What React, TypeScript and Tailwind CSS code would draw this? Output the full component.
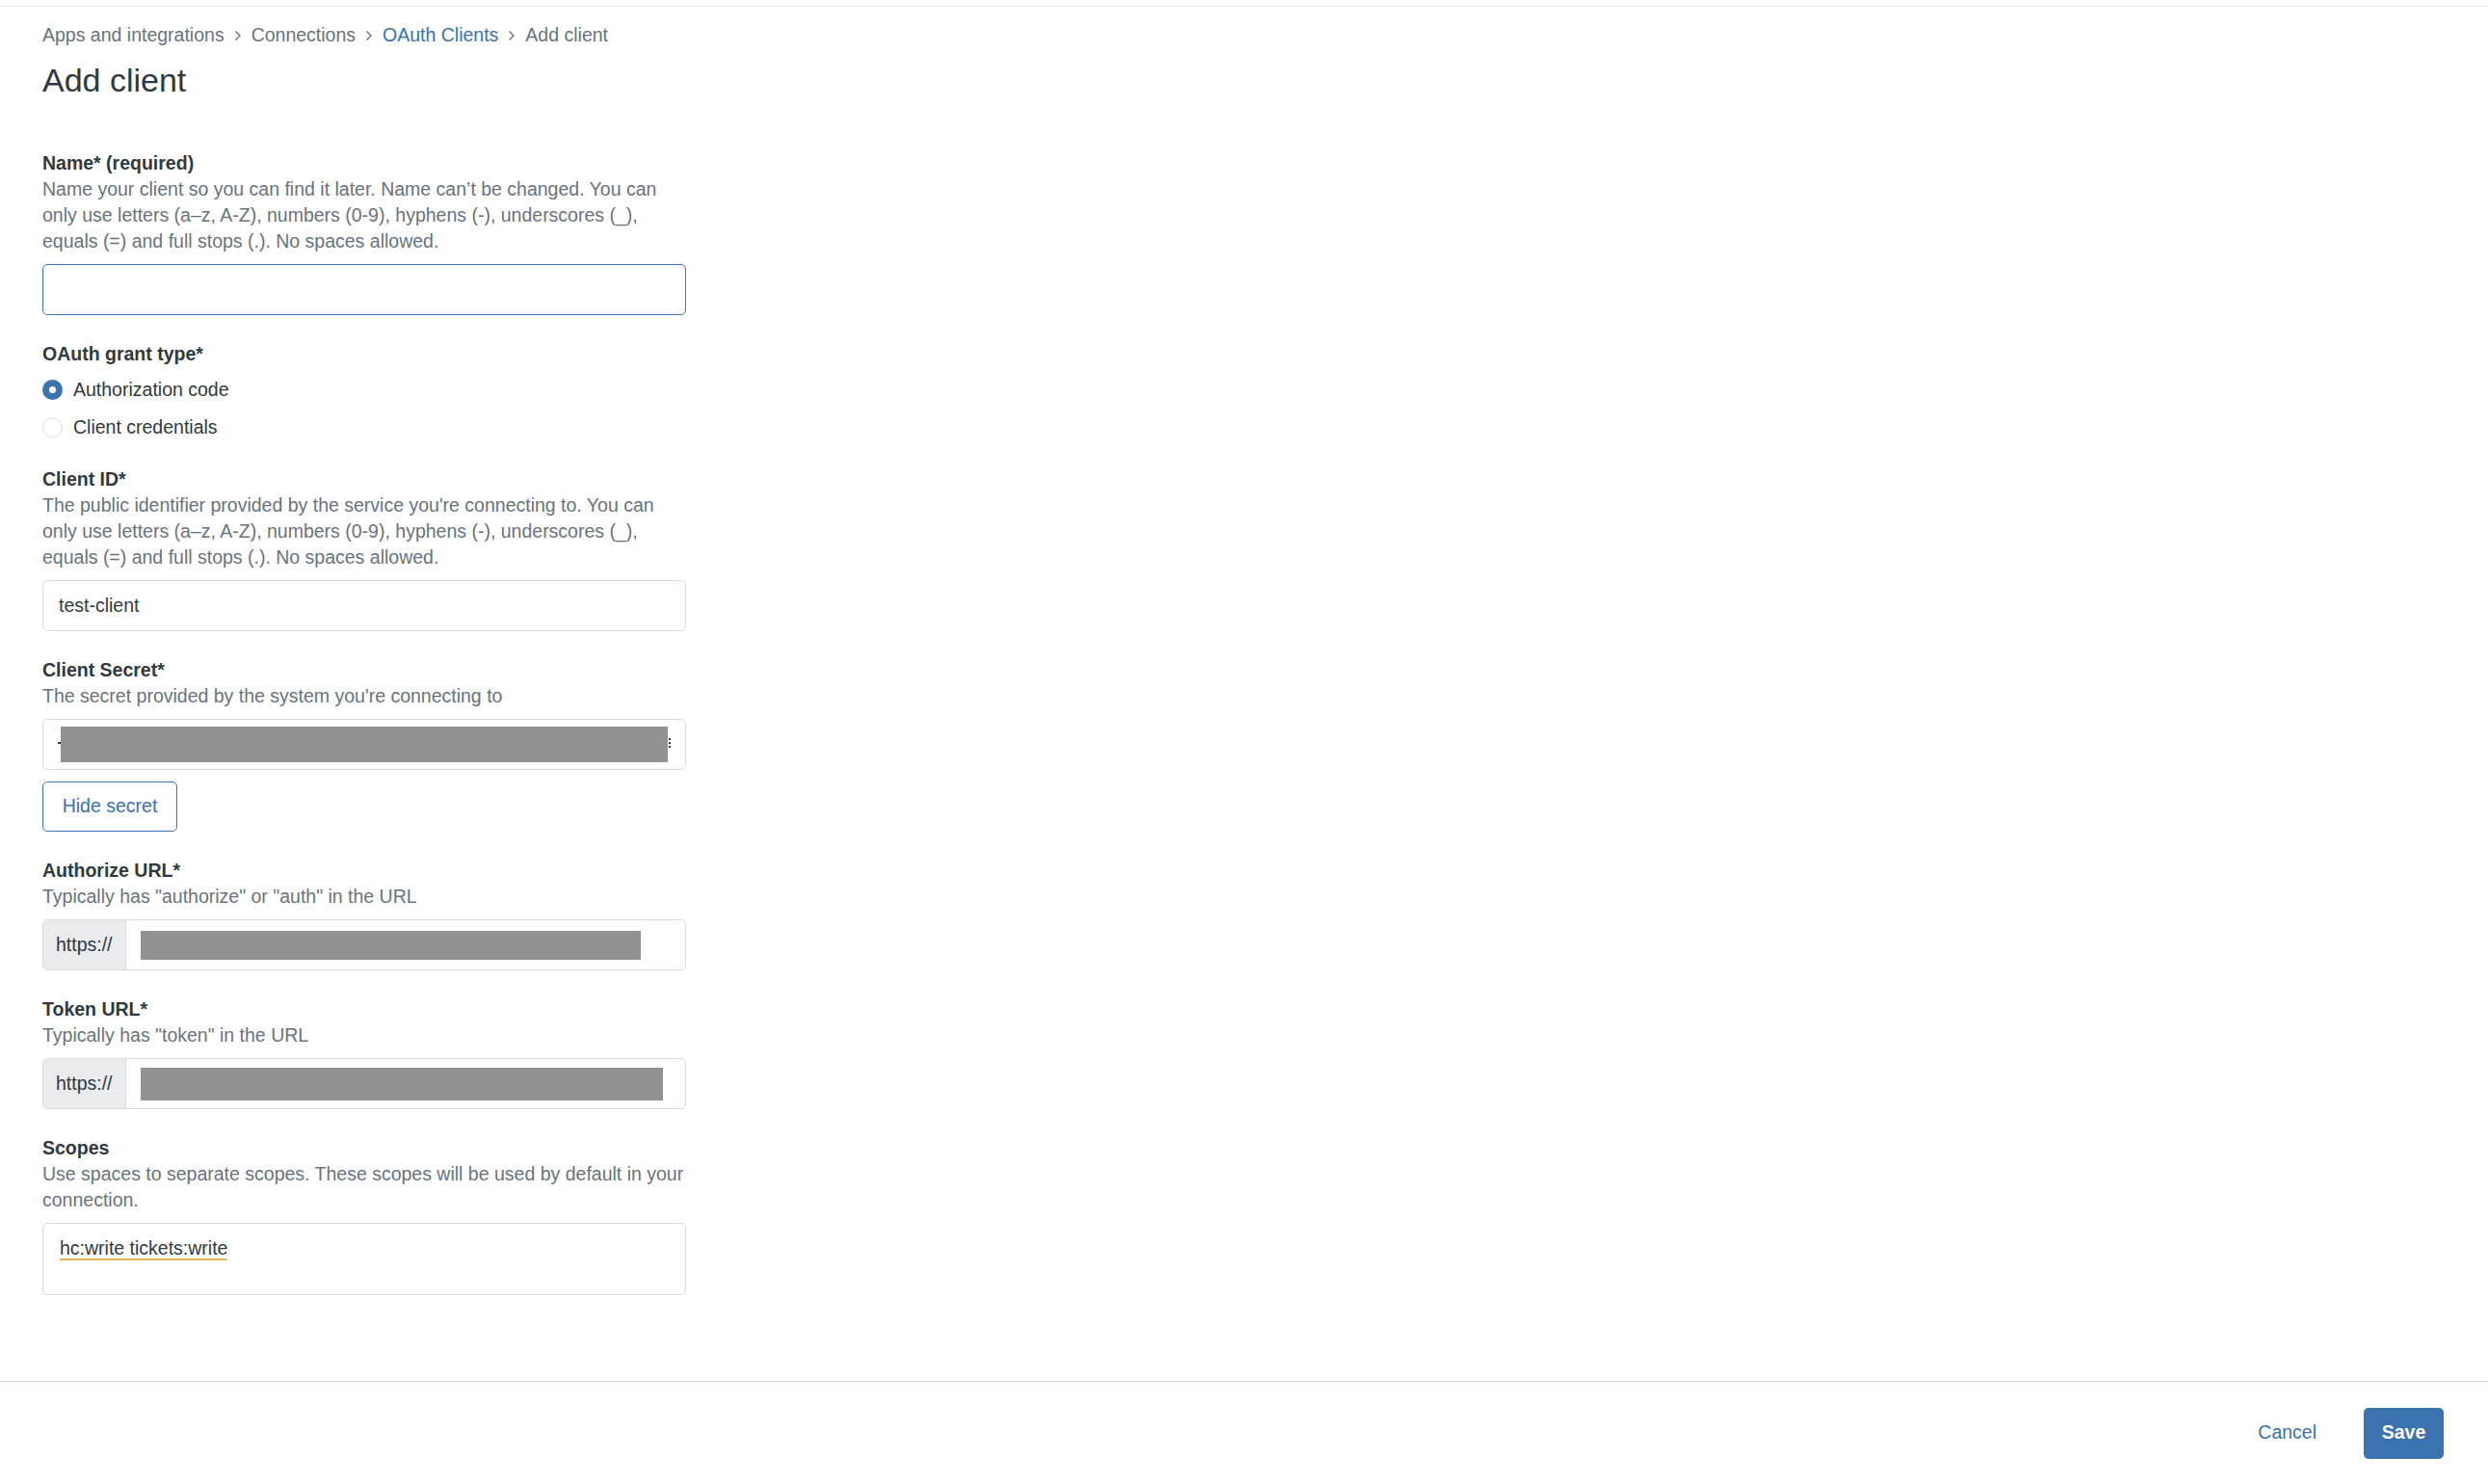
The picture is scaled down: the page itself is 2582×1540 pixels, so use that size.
import { ReactNode } from 'react';

interface FieldProps {
  label: string;
  hint?: ReactNode;
  children: ReactNode;
}

function Field({ label, hint, children }: FieldProps) {
  return (
    <div className="flex flex-col">
      <div className="text-[19.5px] leading-[27px] font-bold text-[#2f3941]">{label}</div>
      {hint && <div className="text-[19.5px] leading-[27px] text-[#68737d]">{hint}</div>}
      <div className="mt-[10px]">{children}</div>
    </div>
  );
}

function Chevron() {
  return (
    <svg width="8" height="12" viewBox="0 0 8 12" className="mx-[10px] shrink-0">
      <path d="M1.5 1.5 L6 6 L1.5 10.5" fill="none" stroke="#68737d" strokeWidth="1.4" />
    </svg>
  );
}

function Redacted({ className }: { className: string }) {
  return <div className={`bg-[#919191] ${className}`} />;
}

function UrlInput({ box }: { box: string }) {
  return (
    <div className="flex h-[53px] w-[668px] rounded-[5px] border border-[#d8dcde] overflow-hidden">
      <div className="flex w-[86px] items-center border-r border-[#d8dcde] bg-[#e9ebed] pl-[13px] text-[19.5px] text-[#2f3941]">
        https://
      </div>
      <div className="flex flex-1 items-center pl-[15px]">
        <Redacted className={box} />
      </div>
    </div>
  );
}

export default function App() {
  return (
    <div className="flex h-[1540px] flex-col bg-white font-['Liberation_Sans',Arial,sans-serif] text-[#2f3941]">
      <div className="h-[7px] border-b border-[#e3e5e7]" />

      <main className="flex-1 pl-[44px]">
        {/* Breadcrumb */}
        <nav className="mt-[16px] flex items-center text-[19.5px] leading-[27px] text-[#68737d]">
          <span>Apps and integrations</span>
          <Chevron />
          <span>Connections</span>
          <Chevron />
          <span className="text-[#3872b5]">OAuth Clients</span>
          <Chevron />
          <span>Add client</span>
        </nav>

        <h1 className="mt-[13px] text-[34px] leading-[40px] text-[#2f3941]">Add client</h1>

        <form className="mt-[53px] flex w-[668px] flex-col gap-[27px]">
          <Field
            label="Name* (required)"
            hint="Name your client so you can find it later. Name can’t be changed. You can only use letters (a–z, A-Z), numbers (0-9), hyphens (-), underscores (_), equals (=) and full stops (.). No spaces allowed."
          >
            <div className="h-[53px] rounded-[5px] border border-[#3f74b4]" />
          </Field>

          <div className="flex flex-col">
            <div className="text-[19.5px] leading-[27px] font-bold">OAuth grant type*</div>
            <div className="mt-[10px] flex flex-col gap-[12px]">
              <label className="flex h-[27px] items-center gap-[11px] text-[19.5px]">
                <span className="flex h-[21px] w-[21px] items-center justify-center rounded-full bg-[#3b73b0]">
                  <span className="h-[7px] w-[7px] rounded-full bg-white" />
                </span>
                Authorization code
              </label>
              <label className="flex h-[27px] items-center gap-[11px] text-[19.5px]">
                <span className="h-[21px] w-[21px] rounded-full border border-[#d8dcde] bg-white" />
                Client credentials
              </label>
            </div>
          </div>

          <Field
            label="Client ID*"
            hint="The public identifier provided by the service you're connecting to. You can only use letters (a–z, A-Z), numbers (0-9), hyphens (-), underscores (_), equals (=) and full stops (.). No spaces allowed."
          >
            <div className="flex h-[53px] items-center rounded-[5px] border border-[#d8dcde] pl-[16px] text-[19.5px]">
              test-client
            </div>
          </Field>

          <div className="flex flex-col">
            <Field label="Client Secret*" hint="The secret provided by the system you're connecting to">
              <div className="relative flex h-[53px] items-center rounded-[5px] border border-[#d8dcde] pl-[18px]">
                <Redacted className="h-[37px] w-[630px]" />
                <span className="absolute left-[15px] top-[23px] h-[2px] w-[3px] bg-[#2f3941]" />
                <span className="absolute left-[649px] top-[19px] flex flex-col gap-[2px]">
                  <span className="h-[2px] w-[2px] bg-[#2f3941]" />
                  <span className="h-[2px] w-[2px] bg-[#2f3941]" />
                  <span className="h-[2px] w-[2px] bg-[#2f3941]" />
                </span>
              </div>
            </Field>
            <button
              type="button"
              className="mt-[12px] h-[52px] w-[140px] rounded-[5px] border border-[#3f74b4] text-[19.5px] text-[#3872b5]"
            >
              Hide secret
            </button>
          </div>

          <Field label="Authorize URL*" hint={'Typically has "authorize" or "auth" in the URL'}>
            <UrlInput box="h-[30px] w-[519px]" />
          </Field>

          <Field label="Token URL*" hint={'Typically has "token" in the URL'}>
            <UrlInput box="h-[34px] w-[542px]" />
          </Field>

          <Field
            label="Scopes"
            hint="Use spaces to separate scopes. These scopes will be used by default in your connection."
          >
            <div className="h-[75px] rounded-[5px] border border-[#d8dcde] pl-[17px] pt-[12px] text-[19.5px] leading-[27px]">
              <span className="border-b-2 border-[#e8b25a]">hc:write tickets:write</span>
            </div>
          </Field>
        </form>
      </main>

      {/* Footer actions */}
      <footer className="flex h-[107px] items-center justify-end gap-[49px] border-t border-[#d8dcde] pr-[46px]">
        <button type="button" className="text-[19.5px] text-[#3872b5]">
          Cancel
        </button>
        <button
          type="button"
          className="h-[53px] w-[83px] rounded-[5px] bg-[#3b73b0] text-[19.5px] font-bold text-white"
        >
          Save
        </button>
      </footer>
    </div>
  );
}
